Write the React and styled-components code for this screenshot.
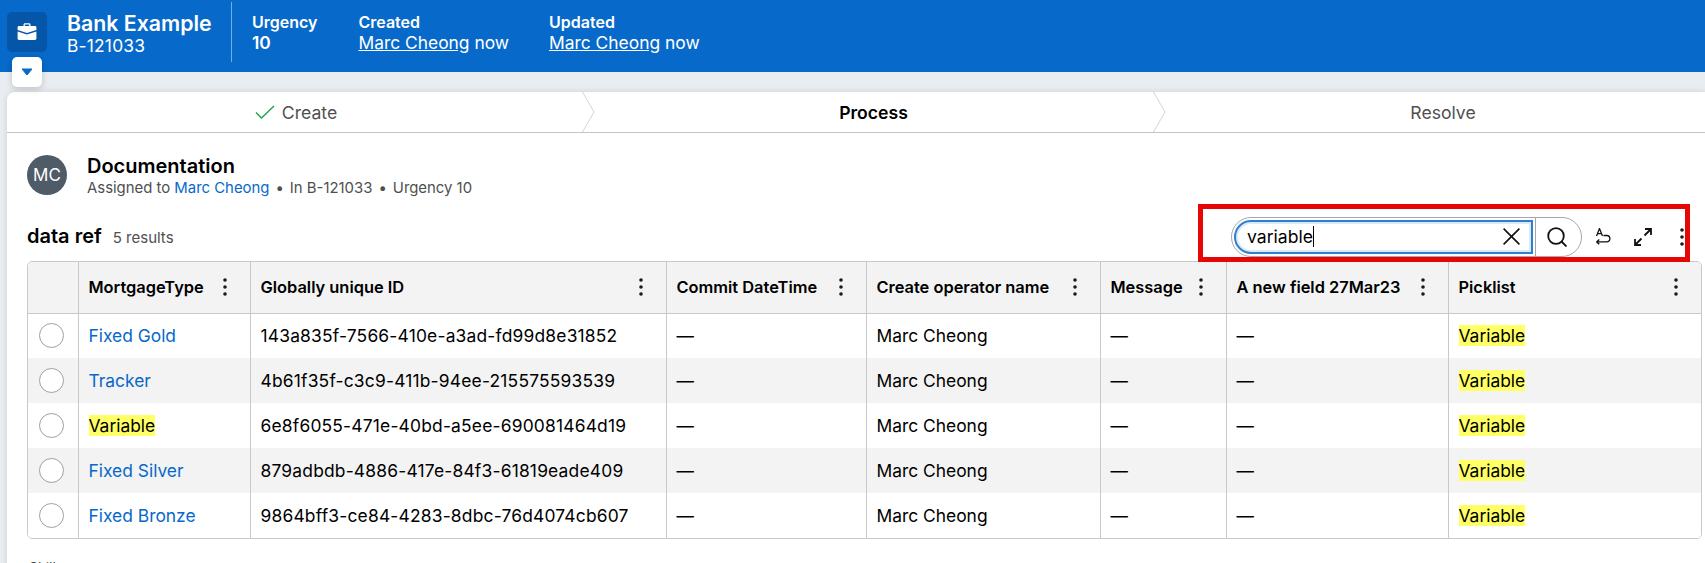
import React from 'react';
import styled, { createGlobalStyle } from 'styled-components';

const Global = createGlobalStyle`
  html, body { margin: 0; padding: 0; height: 100%; overflow: hidden; }
  body { background: #e9edf1; font-family: Inter, "Liberation Sans", sans-serif; color: #000; }
`;

const Page = styled.div`
  width: 1705px; height: 563px; overflow: hidden; display: flex; flex-direction: column;
`;
const Header = styled.header`
  position: relative; flex: 0 0 72px; height: 72px; background: #0769c9; color: #fff;
  display: flex; align-items: flex-start; padding: 2px 0 0 7px; box-sizing: border-box;
`;
const CaseIcon = styled.div`
  flex: 0 0 40px; width: 40px; height: 40px; margin-top: 10px; border-radius: 5px; background: #0556a8;
  display: flex; align-items: center; justify-content: center;
`;
const Toggle = styled.button`
  position: absolute; left: 12px; top: 57px; width: 30px; height: 30px; border: 0; padding: 0;
  border-radius: 5px; background: #fff; box-shadow: 0 2px 6px rgba(0,0,0,.18);
  display: flex; align-items: center; justify-content: center; z-index: 2;
`;
const Title = styled.div`
  margin-left: 20px; width: 163px; padding-top: 9px; line-height: 24px;
`;
const TitleMain = styled.div`font-size: 21.300px; font-weight: 600; white-space: nowrap;`;
const TitleSub = styled.div`font-size: 17.400px; line-height: 21px; letter-spacing: .2px;`;
const Divider = styled.div`
  width: 1px; height: 60px; background: rgba(255,255,255,.45); margin: 0 20px 0 1px;
`;
const Meta = styled.div`
  margin-right: ${p => p.$gap}px; padding-top: 10px;
`;
const MetaLabel = styled.div`font-size: 16px; font-weight: 600; line-height: 20px;`;
const MetaValue = styled.div`font-size: 17.400px; line-height: 21px; font-weight: ${p => p.$bold ? 600 : 400}; white-space: nowrap;
  a { color: #fff; text-decoration: underline; }
`;
const Panel = styled.main`
  flex: 1; margin: 20px 0 0 7px; background: #fff; border-radius: 8px 0 0 0; min-width: 0;
  box-shadow: 0 0 6px rgba(0,0,0,.12);
`;
const Stages = styled.nav`
  height: 41px; box-sizing: border-box; border-bottom: 1px solid #c4c4c4; display: flex;
`;
const Stage = styled.div`
  position: relative; flex: 0 0 ${p => p.$w}px; box-sizing: border-box; padding-left: ${p => p.$pad || 0}px;
  display: flex; align-items: center; justify-content: center; gap: 7px;
  font-size: 17.600px; color: ${p => p.$active ? '#000' : '#4f4f4f'}; font-weight: ${p => p.$active ? 600 : 400};
`;
const Chevron = styled.svg`
  position: absolute; right: -12px; top: 0; width: 13px; height: 40px; z-index: 1;
`;
const Work = styled.section`padding: 0 0 0 20px;`;
const Assign = styled.div`display: flex; align-items: flex-start; padding-top: 22px; height: 60px; box-sizing: border-box;`;
const Avatar = styled.div`
  width: 40px; height: 40px; border-radius: 50%; background: #4f5b67; color: #fff; font-size: 17px;
  display: flex; align-items: center; justify-content: center; margin-right: 20px;
`;
const AssignTitle = styled.div`font-size: 20px; font-weight: 600; line-height: 24px; margin-top: -1px;`;
const AssignSub = styled.div`font-size: 14.900px; line-height: 20px; color: #4f4f4f; white-space: nowrap;
  a { color: #0769c9; text-decoration: none; }
  span { margin: 0 6px; }
`;
const ToolRow = styled.div`
  display: flex; align-items: flex-start; justify-content: space-between; height: 57px; margin-top: 11px;
  padding-right: 15px;
`;
const Heading = styled.div`display: flex; align-items: baseline; gap: 11px; padding-top: 20px; line-height: 24px;`;
const HeadingText = styled.span`font-size: 20px; font-weight: 600;`;
const Count = styled.span`font-size: 15px; color: #4f4f4f;`;
const Tools = styled.div`
  position: relative; z-index: 1;
  flex: 0 0 492px; height: 58px; box-sizing: border-box; border: 5px solid #e60606; display: flex; align-items: center;
  padding: 7px 0 0 28px;
`;
const Search = styled.div`
  flex: 0 0 351px; height: 40px; box-sizing: border-box; border: 1px solid #a8a8a8; border-radius: 20px; display: flex; overflow: hidden;
`;
const InputWrap = styled.div`
  flex: 0 0 299px; display: flex; align-items: center; box-sizing: border-box; padding: 0 11px 0 11px;
  border: 2px solid #2f7fd0; border-radius: 18px 0 0 18px; box-shadow: inset 0 0 0 2px #dce9f7; font-size: 17.600px;
  margin: 2px 0 2px 2px;
`;
const InputText = styled.span`flex: 1;`;
const Caret = styled.i`display: inline-block; width: 1px; height: 21px; background: #000; vertical-align: middle; margin-top: -2px;`;
const SearchBtn = styled.div`
  flex: 1; border-left: 1px solid #a8a8a8; margin-left: 2px; display: flex; align-items: center; justify-content: center; padding-right: 3px;
`;
const ToolIcon = styled.div`
  flex: none; margin-left: ${p => p.$ml}px; display: flex; align-items: center; justify-content: center;
`;
const TableWrap = styled.div`
  width: 1675px; border: 1px solid #c9c9c9; border-radius: 5px; overflow: hidden; box-sizing: border-box;
`;
const Table = styled.table`
  width: 100%; border-collapse: collapse; table-layout: fixed;
`;
const Th = styled.th`
  height: 51px; padding: 0 15px 0 10px; box-sizing: border-box; background: #f3f3f3; text-align: left; font-size: 16.400px; font-weight: 600;
  border-left: 1px solid #c9c9c9; border-bottom: 1px solid #c9c9c9;
  &:first-child { border-left: 0; }
`;
const ThInner = styled.div`display: flex; align-items: center; justify-content: space-between; white-space: nowrap;`;
const Tr = styled.tr`background: ${p => p.$odd ? '#f3f3f3' : '#fff'};`;
const Td = styled.td`
  height: 45px; padding: 0 10px; box-sizing: border-box; font-size: 17.400px; border-left: 1px solid #c9c9c9; white-space: nowrap;
  &:first-child { border-left: 0; padding: 0 0 0 11px; }
`;
const Guid = styled.span`letter-spacing: .2px;`;
const Radio = styled.div`
  width: 25px; height: 25px; box-sizing: border-box; border-radius: 50%; background: #fff; border: 1px solid #a0a0a0;
`;
const Link = styled.a`color: #0769c9; text-decoration: none;`;
const Mark = styled.mark`background: #ffff66; color: #000;`;
const Peek = styled.div`font-size: 14px; line-height: 18px; color: #444; margin-top: 20px; padding-left: 2px;`;

const Dots = ({ width = 20 }) => (
  <svg width={width} height="20" viewBox={`${10 - width / 2} 0 ${width} 20`} fill="#1a1a1a"><circle cx="10" cy="3" r="1.800" /><circle cx="10" cy="10" r="1.800" /><circle cx="10" cy="17" r="1.800" /></svg>
);

const cols = [
  ['MortgageType', 172],
  ['Globally unique ID', 416],
  ['Commit DateTime', 200],
  ['Create operator name', 234],
  ['Message', 126],
  ['A new field 27Mar23', 222],
  ['Picklist', null],
];

const rows = [
  ['Fixed Gold', '143a835f-7566-410e-a3ad-fd99d8e31852'],
  ['Tracker', '4b61f35f-c3c9-411b-94ee-215575593539'],
  ['Variable', '6e8f6055-471e-40bd-a5ee-690081464d19'],
  ['Fixed Silver', '879adbdb-4886-417e-84f3-61819eade409'],
  ['Fixed Bronze', '9864bff3-ce84-4283-8dbc-76d4074cb607'],
];

export default function App() {
  return (
    <Page>
      <Global />
      <Header>
        <CaseIcon>
          <svg width="20" height="18" viewBox="0 0 20 18" fill="#fff">
            <path d="M6.500 3V1.600C6.500.8 7.200.2 8 .2h4c.8 0 1.500.6 1.500 1.400V3H18c.8 0 1.400.6 1.400 1.400V7L10 10 .6 7V4.400C.6 3.600 1.200 3 2 3h4.500zm1.300 0h4.400V1.500H7.800V3zM.6 8.500 10 11.500l9.400-3v7.100c0 .8-.6 1.400-1.400 1.400H2c-.8 0-1.400-.6-1.400-1.400V8.500z" />
          </svg>
        </CaseIcon>
        <Toggle aria-label="Expand">
          <svg width="12" height="8" viewBox="0 0 12 8"><path d="M1 1h10L6 7z" fill="#0769c9" stroke="#0769c9" /></svg>
        </Toggle>
        <Title>
          <TitleMain>Bank Example</TitleMain>
          <TitleSub>B-121033</TitleSub>
        </Title>
        <Divider />
        <Meta $gap={41}>
          <MetaLabel>Urgency</MetaLabel>
          <MetaValue $bold>10</MetaValue>
        </Meta>
        <Meta $gap={40}>
          <MetaLabel>Created</MetaLabel>
          <MetaValue><a href="#a">Marc Cheong</a> now</MetaValue>
        </Meta>
        <Meta $gap={0}>
          <MetaLabel>Updated</MetaLabel>
          <MetaValue><a href="#a">Marc Cheong</a> now</MetaValue>
        </Meta>
      </Header>
      <Panel>
        <Stages>
          <Stage $w={576} $pad={2}>
            <svg width="20" height="14" viewBox="0 0 20 14" fill="none" stroke="#1fa74f" strokeWidth="1.500"><path d="M1 7.500 6.500 13 19 1" /></svg>
            Create
            <Chevron viewBox="0 0 13 40" fill="none" stroke="#d4d4d4"><path d="M.5 0 12 20 .5 40" /></Chevron>
          </Stage>
          <Stage $active $w={571} $pad={10}>
            Process
            <Chevron viewBox="0 0 13 40" fill="none" stroke="#d4d4d4"><path d="M.5 0 12 20 .5 40" /></Chevron>
          </Stage>
          <Stage $w={568} $pad={10}>Resolve</Stage>
        </Stages>
        <Work>
          <Assign>
            <Avatar>MC</Avatar>
            <div>
              <AssignTitle>Documentation</AssignTitle>
              <AssignSub>Assigned to <a href="#a">Marc Cheong</a><span>•</span>In B-121033<span>•</span>Urgency 10</AssignSub>
            </div>
          </Assign>
          <ToolRow>
            <Heading>
              <HeadingText>data ref</HeadingText>
              <Count>5 results</Count>
            </Heading>
            <Tools>
              <Search>
                <InputWrap>
                  <InputText>variable<Caret /></InputText>
                  <svg width="17" height="17" viewBox="0 0 17 17" stroke="#111" strokeWidth="1.600" fill="none"><path d="M.6.6l15.800 15.800M16.400.6.6 16.400" /></svg>
                </InputWrap>
                <SearchBtn>
                  <svg width="20" height="20" viewBox="0 0 20 20" stroke="#111" strokeWidth="1.800" fill="none"><circle cx="9" cy="9" r="7.800" /><path d="m14.500 14.500 5 5" /></svg>
                </SearchBtn>
              </Search>
              <ToolIcon $ml={13}>
                <svg width="16" height="17" viewBox="0 0 16 17" fill="none" stroke="#111" strokeWidth="1.300"><path d="M1.500 8 4.500.6 7.500 8M2.600 5.700h3.800" /><path d="M8.500 7.500h3.200a3.200 3.200 0 0 1 0 6.400H1.500m0 0 2.800-2.400M1.500 13.900l2.800 2.400" /></svg>
              </ToolIcon>
              <ToolIcon $ml={23}>
                <svg width="18" height="18" viewBox="0 0 18 18" fill="none" stroke="#111" strokeWidth="1.800"><path d="M11 1h6v6M17 1l-6.500 6.500M7 17H1v-6M1 17l6.500-6.500" /></svg>
              </ToolIcon>
              <ToolIcon $ml={27}><Dots width={6} /></ToolIcon>
            </Tools>
          </ToolRow>
          <TableWrap>
            <Table>
              <colgroup>
                <col style={{ width: 50 }} />
                {cols.map(([name, w]) => <col key={name} style={w ? { width: w } : undefined} />)}
              </colgroup>
              <thead>
                <tr>
                  <Th />
                  {cols.map(([name]) => (
                    <Th key={name}>
                      <ThInner>{name}<Dots /></ThInner>
                    </Th>
                  ))}
                </tr>
              </thead>
              <tbody>
                {rows.map(([t, id], i) => (
                  <Tr key={id} $odd={i % 2 === 1}>
                    <Td><Radio /></Td>
                    <Td>{t === 'Variable' ? <Mark>Variable</Mark> : <Link href="#a">{t}</Link>}</Td>
                    <Td><Guid>{id}</Guid></Td>
                    <Td>—</Td>
                    <Td>Marc Cheong</Td>
                    <Td>—</Td>
                    <Td>—</Td>
                    <Td><Mark>Variable</Mark></Td>
                  </Tr>
                ))}
              </tbody>
            </Table>
          </TableWrap>
          <Peek>Skills</Peek>
        </Work>
      </Panel>
    </Page>
  );
}
